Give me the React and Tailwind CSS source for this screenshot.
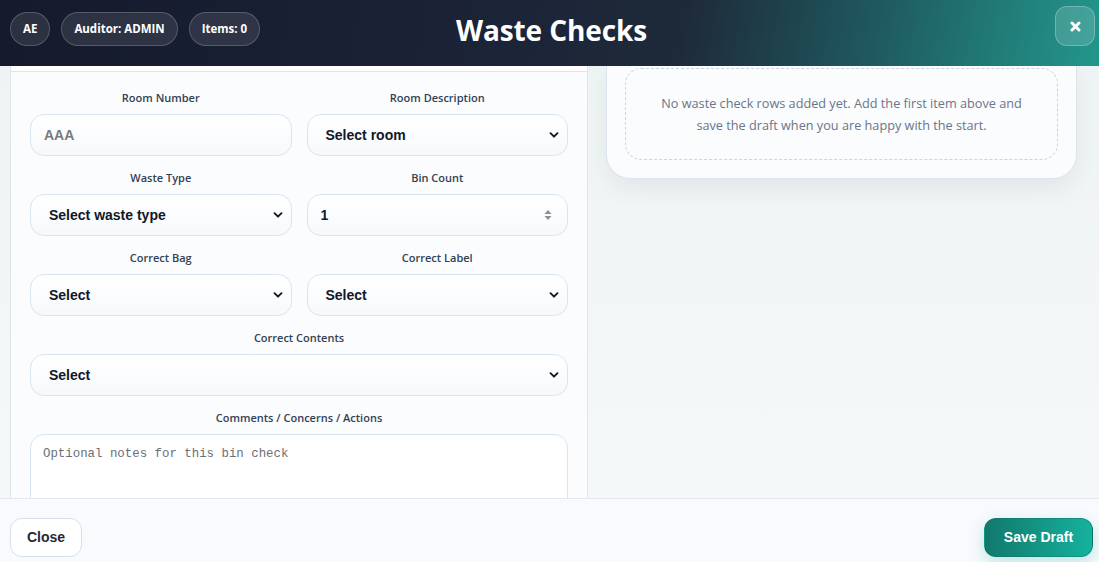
import React from "react";

const sans = { fontFamily: '"Open Sans", "Noto Sans", sans-serif' };
const arial = { fontFamily: '"Liberation Sans", Arial, sans-serif' };

function Label({ children }) {
  return (
    <div className="h-4 flex items-center justify-center text-[11px] font-semibold text-[#334155] leading-4" style={sans}>
      {children}
    </div>
  );
}

function Chevron() {
  return (
    <svg width="10" height="10" viewBox="0 0 10 10" className="shrink-0">
      <path d="M1.5 3.2 L5 6.7 L8.5 3.2" fill="none" stroke="#111827" strokeWidth="1.9" strokeLinecap="round" strokeLinejoin="round" />
    </svg>
  );
}

function SelectBox({ value }) {
  return (
    <div
      className="h-[42px] rounded-[14px] border border-[#d9e5f1] bg-gradient-to-b from-white to-[#f6f9fc] flex items-center justify-between pl-[18px] pr-[8px] text-[14px] font-bold text-[#111827]"
      style={arial}
    >
      <span>{value}</span>
      <Chevron />
    </div>
  );
}

function Field({ label, children }) {
  return (
    <div className="flex flex-col gap-2">
      <Label>{label}</Label>
      {children}
    </div>
  );
}

export default function App() {
  return (
    <div className="w-[1099px] h-[562px] flex flex-col overflow-hidden bg-[#eef3f4]">
      {/* Header */}
      <div className="h-[66px] shrink-0 flex items-center justify-between pl-[10px] pr-[4px] bg-[linear-gradient(100deg,#151a2c_0%,#1b2236_40%,#1e2a3a_62%,#1f5b60_80%,#217a76_90%,#23968b_100%)] relative">
        <div className="flex items-center gap-[11px] mb-[9px]" style={sans}>
          <div className="h-[34px] px-[12px] rounded-full bg-white/10 border border-white/20 flex items-center text-[11.5px] font-bold text-white">AE</div>
          <div className="h-[34px] px-[12px] rounded-full bg-white/10 border border-white/20 flex items-center text-[11.5px] font-bold text-white">Auditor: ADMIN</div>
          <div className="h-[34px] px-[12px] rounded-full bg-white/10 border border-white/20 flex items-center text-[11.5px] font-bold text-white">Items: 0</div>
        </div>
        <div className="absolute left-[4px] right-0 top-0 h-[60px] flex items-center justify-center pointer-events-none">
          <span className="text-[28px] font-bold text-white tracking-[-0.1px]" style={sans}>Waste Checks</span>
        </div>
        <div className="w-[40px] h-[40px] mb-[14px] rounded-[12px] bg-white/15 border border-white/25 flex items-center justify-center">
          <svg width="11" height="11" viewBox="0 0 11 11">
            <path d="M2 2 L9 9 M9 2 L2 9" stroke="white" strokeWidth="3" strokeLinecap="round" />
          </svg>
        </div>
      </div>

      {/* Body */}
      <div className="flex-1 min-h-0 flex gap-[18px] pl-[10px] bg-[linear-gradient(180deg,#eef3f4,#f5f8f9)]">
        {/* Left panel */}
        <div className="w-[578px] shrink-0 flex flex-col bg-[#fafcfd] border-x border-[#dbe6f0] overflow-hidden">
          <div className="h-[6px] shrink-0 border-b border-[#dbe6f0] bg-white" />
          <div className="px-[19px] pt-[18px] flex flex-col gap-[14px]">
            <div className="grid grid-cols-2 gap-x-[15px] gap-y-[14px]">
              <Field label="Room Number">
                <div
                  className="h-[42px] rounded-[14px] border border-[#d9e5f1] bg-gradient-to-b from-white to-[#f6f9fc] flex items-center pl-[13px] text-[14px] font-bold text-[#7a7a7a]"
                  style={arial}
                >
                  AAA
                </div>
              </Field>
              <Field label="Room Description">
                <SelectBox value="Select room" />
              </Field>
              <Field label="Waste Type">
                <SelectBox value="Select waste type" />
              </Field>
              <Field label="Bin Count">
                <div
                  className="h-[42px] rounded-[14px] border border-[#d9e5f1] bg-gradient-to-b from-white to-[#f6f9fc] flex items-center justify-between pl-[13px] pr-[15px] text-[14px] font-bold text-[#111827]"
                  style={arial}
                >
                  <span>1</span>
                  <svg width="8" height="12" viewBox="0 0 8 12">
                    <path d="M4 1 L7.5 5 L0.5 5 Z" fill="#8a8f98" />
                    <path d="M4 11 L7.5 7 L0.5 7 Z" fill="#8a8f98" />
                  </svg>
                </div>
              </Field>
              <Field label="Correct Bag">
                <SelectBox value="Select" />
              </Field>
              <Field label="Correct Label">
                <SelectBox value="Select" />
              </Field>
            </div>
            <Field label="Correct Contents">
              <SelectBox value="Select" />
            </Field>
            <Field label="Comments / Concerns / Actions">
              <div className="h-[120px] rounded-[14px] border border-[#d9e5f1] bg-white px-[12px] pt-[10px] text-[12.4px] text-[#6b6f76]" style={{ fontFamily: '"Liberation Mono", "DejaVu Sans Mono", monospace' }}>
                Optional notes for this bin check
              </div>
            </Field>
          </div>
        </div>

        {/* Right panel */}
        <div className="w-[471px] shrink-0 flex flex-col">
          <div className="rounded-b-[24px] border border-t-0 border-[#dbe5f0] bg-[#fafcfe] px-[18px] pt-[2px] pb-[18px] shadow-[0_10px_24px_rgba(15,23,42,0.06)]">
            <div className="h-[92px] rounded-[16px] border border-dashed border-[#cbd5e1] flex items-center justify-center text-center px-[28px] text-[12.7px] leading-[22px] text-[#6b7488]" style={sans}>
              No waste check rows added yet. Add the first item above and save the draft when you are happy with the start.
            </div>
          </div>
        </div>
      </div>

      {/* Footer */}
      <div className="h-[64px] shrink-0 border-t border-[#e3e9f1] bg-[#f8fafd] flex items-start justify-between pl-[10px] pr-[6px] pt-[19px]">
        <div className="h-[39px] w-[72px] rounded-[12px] border border-[#d5e0ec] bg-white flex items-center justify-center text-[14px] font-bold text-[#1f2937]" style={arial}>
          Close
        </div>
        <div className="h-[39px] w-[109px] rounded-[12px] bg-gradient-to-r from-[#11796d] to-[#15b29e] border border-[#0f6b61]/40 flex items-center justify-center text-[14px] font-bold text-white shadow-[0_6px_16px_rgba(20,170,150,0.25)]" style={arial}>
          Save Draft
        </div>
      </div>
    </div>
  );
}
